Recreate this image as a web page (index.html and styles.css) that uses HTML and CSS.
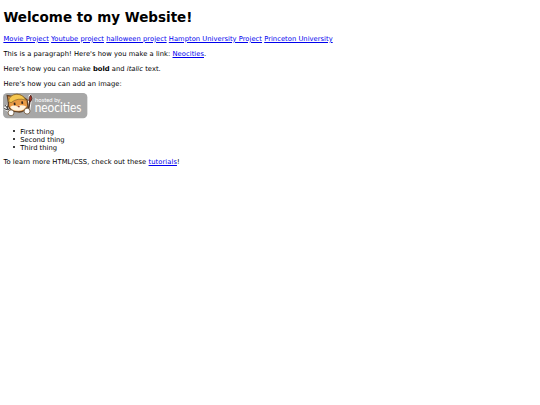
FILE: index.html
```html
<!DOCTYPE html>
<html lang="en">
<head>
    <meta charset="UTF-8">
    <meta name="viewport" content="width=device-width, initial-scale=1.0">
    <title>My Website</title>
    <link rel="stylesheet" href="styles.css">
</head>
<body>
    <h1>Welcome to my Website!</h1>

    <p class="projects">
        <a href="#">Movie Project</a>
        <a href="#">Youtube project</a>
        <a href="#">halloween project</a>
        <a href="#">Hampton University Project</a>
        <a href="#">Princeton University</a>
    </p>

    <p>This is a paragraph! Here's how you make a link: <a href="#">Neocities</a>.</p>

    <p class="styled">Here's how you can make <strong>bold</strong> and <em>italic</em> text.</p>

    <p>Here's how you can add an image:</p>

    <svg class="badge" viewBox="0 0 200 60" role="img" aria-label="Hosted by Neocities">
        <rect x="0" y="0" width="200" height="60" rx="10" fill="#a7a7a7"/>
        <!-- fork -->
        <path d="M6 30 L18 45 M2 36 L10 40 L11 30" fill="none" stroke="#fff" stroke-width="6"/>
        <path d="M5 29 L19 46 M2 37 L10 40 L11 30" fill="none" stroke="#444" stroke-width="2.5"/>
        <!-- brush -->
        <path d="M65 8 L60 40" stroke="#fff" stroke-width="9" stroke-linecap="round"/>
        <path d="M64 17 L60 41" stroke="#4b3328" stroke-width="4"/>
        <path d="M61 18 Q61 9 66 5 Q71 12 66 20 Z" fill="#a73225" stroke="#42251e" stroke-width="2"/>
        <!-- cat -->
        <path d="M13 24 L10 6 L22 8 Q33 -1 45 8 L57 16 L59 32 Q51 46 36 45 Q17 44 13 31 Z" fill="#e99a45" stroke="#604124" stroke-width="3"/>
        <path d="M13 20 Q15 5 31 3 Q48 3 54 17 Q35 10 19 23 Z" fill="#f5c64f" stroke="#94702c" stroke-width="2"/>
        <path d="M17 33 Q25 27 34 32 Q43 26 55 32 Q50 42 36 42 Q20 41 17 33 Z" fill="#fff3df"/>
        <path d="M27 23 L28 29 M45 20 L46 26" stroke="#33251e" stroke-width="4"/>
        <path d="M34 31 L40 31 L38 35 Z" fill="#8d3828"/>
        <circle cx="19" cy="47" r="7" fill="#fff" stroke="#70583d" stroke-width="2"/>
        <circle cx="57" cy="43" r="7" fill="#fff" stroke="#70583d" stroke-width="2"/>
        <text class="badge-small" x="76" y="21" textLength="60" lengthAdjust="spacingAndGlyphs">hosted by</text>
        <text class="badge-name" x="75" y="46" textLength="111" lengthAdjust="spacingAndGlyphs">neocities</text>
    </svg>

    <ul>
        <li>First thing</li>
        <li>Second thing</li>
        <li>Third thing</li>
    </ul>

    <p class="more">To learn more HTML/CSS, check out these <a href="#">tutorials</a>!</p>
</body>
</html>
```
FILE: styles.css
```css
body {
    background-color: white;
    color: black;
    font-family: "DejaVu Sans", Verdana, sans-serif;
    font-size: 6.75px;
    line-height: 8.02px;
    margin: 0;
    padding: 1px 3.375px 0;
}
h1 {
    font-size: 13.5px;
    line-height: 15.6px;
    margin: 9.05px 0;
}
p {
    letter-spacing: 0.04px;
    margin: 6.75px 0;
}
.projects {
    letter-spacing: 0.025px;
    margin-bottom: 7.5px;
}
.styled {
    letter-spacing: 0.02px;
}
.more {
    letter-spacing: 0.06px;
}
a {
    color: #0000ee;
    text-decoration: underline;
}
.badge {
    display: block;
    width: 84.375px;
    height: 25.3px;
    margin-top: -1.2px;
    margin-bottom: 8.9px;
}
.badge-small {
    fill: white;
    font-family: Lato, sans-serif;
    font-size: 15px;
}
.badge-name {
    fill: white;
    font-family: Lato, sans-serif;
    font-size: 32px;
}
ul {
    list-style: none;
    margin: 6.75px 0;
    padding-left: 16.875px;
}
li::before {
    content: "";
    display: inline-block;
    width: 2.4px;
    height: 2.4px;
    margin-left: -7.2px;
    margin-right: 4.8px;
    vertical-align: 1.2px;
    border-radius: 50%;
    background-color: black;
}
```
